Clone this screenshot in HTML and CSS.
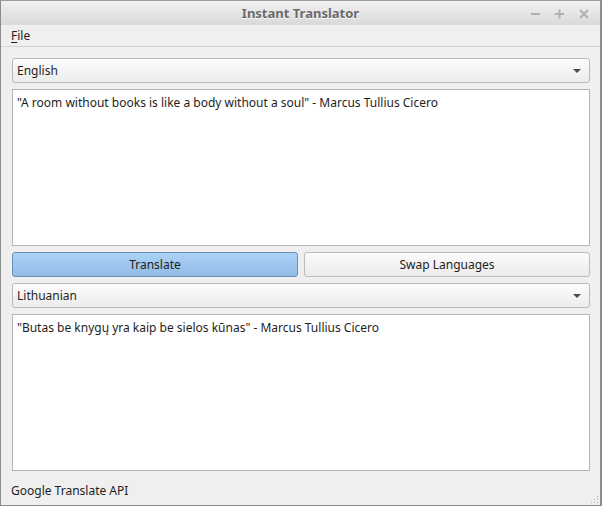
FILE: index.html
```html
<!DOCTYPE html>
<html>
<head>
<meta charset="utf-8">
<link rel="stylesheet" href="styles.css">
</head>
<body>
<div class="window">
  <div class="titlebar">
    <div class="title">Instant Translator</div>
    <div class="controls">
      <svg class="ctl" width="10" height="10" viewBox="0 0 10 10"><rect x="0" y="4" width="9" height="2" fill="#b0b0b0"/></svg>
      <svg class="ctl" width="10" height="10" viewBox="0 0 10 10"><rect x="0" y="4" width="9" height="2" fill="#b0b0b0"/><rect x="3.5" y="0.5" width="2" height="9" fill="#b0b0b0"/></svg>
      <svg class="ctl" width="10" height="10" viewBox="0 0 10 10"><path d="M1 1 L9 9 M9 1 L1 9" stroke="#b0b0b0" stroke-width="2"/></svg>
    </div>
  </div>
  <div class="menubar"><span class="menu"><u>F</u>ile</span></div>
  <div class="content">
    <div class="combo"><span>English</span><span class="arrow"></span></div>
    <div class="textbox">"A room without books is like a body without a soul" - Marcus Tullius Cicero</div>
    <div class="buttons">
      <div class="btn primary">Translate</div>
      <div class="btn">Swap Languages</div>
    </div>
    <div class="combo"><span>Lithuanian</span><span class="arrow"></span></div>
    <div class="textbox">"Butas be knygų yra kaip be sielos kūnas" - Marcus Tullius Cicero</div>
  </div>
  <div class="status">
    <span>Google Translate API</span>
    <svg class="grip" width="8" height="8" viewBox="0 0 8 8">
      <rect x="6" y="0" width="1" height="1" fill="#b5b5b5"/>
      <rect x="3" y="3" width="1" height="1" fill="#b5b5b5"/>
      <rect x="6" y="3" width="1" height="1" fill="#b5b5b5"/>
      <rect x="0" y="6" width="1" height="1" fill="#b5b5b5"/>
      <rect x="3" y="6" width="1" height="1" fill="#b5b5b5"/>
      <rect x="6" y="6" width="1" height="1" fill="#b5b5b5"/>
    </svg>
  </div>
</div>
</body>
</html>
```

FILE: styles.css
```css
html, body {
  margin: 0;
  padding: 0;
  background: #efefef;
}
body {
  font-family: "Noto Sans", "Open Sans", sans-serif;
  font-size: 12px;
  color: #1e1e1e;
}
.window {
  width: 602px;
  height: 506px;
  box-sizing: border-box;
  border: 1px solid #8c8c8c;
  border-top-color: #a0a0a0;
  border-right-width: 2px;
  background: #efefef;
  display: flex;
  flex-direction: column;
}
.titlebar {
  height: 24px;
  flex: none;
  background: linear-gradient(#f1f1f1, #d9d9d9);
  display: flex;
  align-items: center;
  justify-content: center;
  position: relative;
}
.title {
  font-weight: bold;
  font-size: 13px;
  color: #6a6a6a;
  text-shadow: 0 1px 0 #fafafa;
}
.controls {
  position: absolute;
  right: 11px;
  top: 8px;
  display: flex;
  gap: 14px;
}
.ctl { display: block; }
.menubar {
  height: 21px;
  flex: none;
  border-bottom: 1px solid #d4d4d4;
  display: flex;
  align-items: center;
  padding-left: 10px;
}
.menu u { text-decoration-thickness: 1px; text-underline-offset: 2px; }
.content {
  padding: 11px 10px 0 11px;
  display: flex;
  flex-direction: column;
  gap: 6px;
}
.combo {
  height: 25px;
  box-sizing: border-box;
  border: 1px solid #b9b9b9;
  border-radius: 3px;
  background: linear-gradient(#fcfcfc, #ececec);
  display: flex;
  align-items: center;
  justify-content: space-between;
  padding: 0 8px 0 4px;
}
.arrow {
  width: 0;
  height: 0;
  border-left: 4px solid transparent;
  border-right: 4px solid transparent;
  border-top: 4px solid #4a4a4a;
}
.textbox {
  height: 157px;
  box-sizing: border-box;
  border: 1px solid #b4b4b4;
  background: #fff;
  padding: 4px 4px;
}
.buttons {
  display: flex;
  gap: 6px;
}
.btn {
  flex: 1;
  height: 25px;
  box-sizing: border-box;
  border: 1px solid #bcbcbc;
  border-radius: 3px;
  background: linear-gradient(#fbfbfb, #ebebeb);
  display: flex;
  align-items: center;
  justify-content: center;
}
.btn.primary {
  border-color: #6d8fb5;
  background: linear-gradient(#abd2f6, #93bbe6);
}
.status {
  flex: 1;
  display: flex;
  align-items: center;
  padding-left: 10px;
  padding-top: 4px;
  position: relative;
}
.grip {
  position: absolute;
  right: 1px;
  bottom: 1px;
}
```
